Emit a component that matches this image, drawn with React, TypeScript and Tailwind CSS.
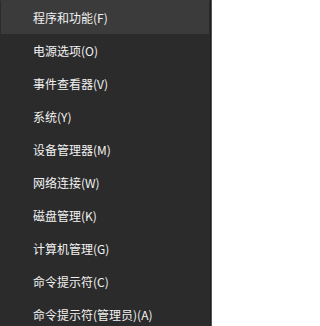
import React from "react";

const items = [
  "程序和功能(F)",
  "电源选项(O)",
  "事件查看器(V)",
  "系统(Y)",
  "设备管理器(M)",
  "网络连接(W)",
  "磁盘管理(K)",
  "计算机管理(G)",
  "命令提示符(C)",
  "命令提示符(管理员)(A)",
];

export default function App() {
  return (
    <div className="w-[212px] h-[326px] overflow-hidden bg-[#2b2b2b] flex">
      <div className="flex-1 flex flex-col border-t border-[#3a3a3a] pl-px pr-px">
        {items.map((t, i) => (
          <div
            key={t}
            className={
              i === 0
                ? "h-[33px] shrink-0 flex items-center pl-[32px] bg-[#3b3b3b] text-[12px] text-[#f2f2f2]"
                : "h-[33px] shrink-0 flex items-center pl-[32px] text-[12px] text-[#f2f2f2]"
            }
            style={{ fontFamily: '"Noto Sans CJK SC", "Noto Sans", sans-serif' }}
          >
            {t}
          </div>
        ))}
      </div>
      <div className="w-px bg-[#1e1e1e]" />
      <div className="w-px bg-[#555555]" />
    </div>
  );
}
